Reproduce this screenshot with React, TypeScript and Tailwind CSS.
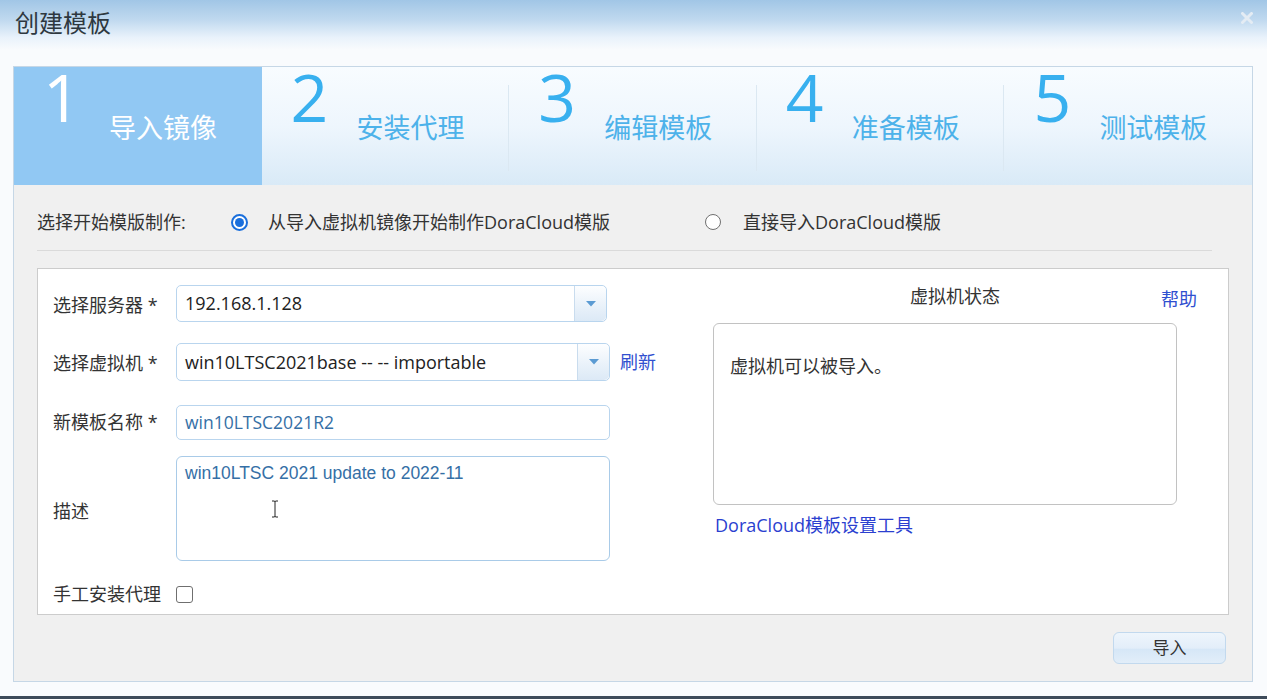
import React from "react";

const CJK = "font-['Open_Sans','Noto_Sans_CJK_SC',sans-serif]";

function Step({ n, label, active, last }: { n: string; label: string; active?: boolean; last?: boolean }) {
  return (
    <div
      className={
        "relative flex-1 flex items-start pl-[29px] " +
        (active
          ? "bg-[#91c8f3]"
          : "bg-[linear-gradient(to_bottom,#f8fcff_0%,#eef6fd_50%,#d9eaf7_100%)]")
      }
    >
      <div
        className={
          "w-[66px] h-[58px] text-[66px] leading-[58px] font-['Open_Sans',sans-serif] " +
          (active ? "text-white" : "text-[#38b0ef]")
        }
      >
        {n}
      </div>
      <div
        className={
          "mt-[43px] h-[36px] leading-[36px] text-[27px] whitespace-nowrap " +
          CJK +
          " " +
          (active ? "text-white" : "text-[#4db2ea]")
        }
      >
        {label}
      </div>
      {!active && !last && n !== "1" ? (
        <div className="absolute right-0 top-[18px] bottom-[14px] w-px bg-[#dbe8f2]" />
      ) : null}
    </div>
  );
}

function Arrow() {
  return (
    <div className="w-[32px] self-stretch flex items-center justify-center border-l border-[#c9dcee] rounded-r-[5px] bg-[linear-gradient(to_bottom,#fdfeff_0%,#eaf2fa_55%,#dce9f6_100%)]">
      <svg width="10" height="6" viewBox="0 0 10 6">
        <polygon points="0,0 10,0 5,5.5" fill="#5b9bd3" />
      </svg>
    </div>
  );
}

export default function App() {
  return (
    <div className={"w-[1267px] h-[699px] flex flex-col bg-[#f9fbfd] border-b-[3px] border-[#3d4b5a] " + CJK}>
      {/* Title bar */}
      <div className="h-[50px] shrink-0 flex items-start justify-between pl-[15px] pr-[14px] bg-[linear-gradient(to_bottom,#a1c6e6_0%,#c0d9ef_40%,#e9f2fb_75%,#f9fbfd_100%)]">
        <div className="mt-[7px] text-[24px] leading-[32px] text-[#2e3840]">创建模板</div>
        <svg className="mt-[12px]" width="12" height="12" viewBox="0 0 12 12">
          <path d="M1.5 1.5 L10.5 10.5 M10.5 1.5 L1.5 10.5" stroke="#e4ecf4" strokeWidth="3" strokeLinecap="round" />
        </svg>
      </div>

      <div className="pt-[16px] pl-[13px]">
        <div className="w-[1240px] h-[616px] border border-[#c6d7e6] bg-[#f0f0f0] flex flex-col">
          {/* Steps */}
          <div className="h-[118px] shrink-0 flex">
            <Step n="1" label="导入镜像" active />
            <Step n="2" label="安装代理" />
            <Step n="3" label="编辑模板" />
            <Step n="4" label="准备模板" />
            <Step n="5" label="测试模板" last />
          </div>

          {/* Radio row */}
          <div className="pt-[24px] pl-[23px]">
            <div className="h-[26px] flex items-center">
              <div className="text-[18px] text-[#333] w-[194px] whitespace-nowrap">选择开始模版制作:</div>
              <div className="w-[17px] h-[17px] rounded-full border-2 border-[#1a6fdc] flex items-center justify-center bg-white">
                <div className="w-[9px] h-[9px] rounded-full bg-[#1a6fdc]" />
              </div>
              <div className="ml-[20px] text-[18px] text-[#333] whitespace-nowrap">从导入虚拟机镜像开始制作DoraCloud模版</div>
              <div className="ml-[95px] w-[16px] h-[16px] rounded-full border-[1.5px] border-[#707070] bg-white" />
              <div className="ml-[22px] text-[18px] text-[#333] whitespace-nowrap">直接导入DoraCloud模版</div>
            </div>
          </div>
          <div className="mt-[15px] ml-[23px] mr-[40px] h-px bg-[#dadada]" />

          {/* Inner panel */}
          <div className="mt-[17px] mx-[23px] h-[347px] border border-[#cccccc] bg-white flex">
            {/* Left column */}
            <div className="w-[675px] pl-[15px] pt-[16px] flex flex-col text-[18px] text-[#333]">
              <div className="flex items-center">
                <div className="w-[123px] pt-[3px] whitespace-nowrap">选择服务器 *</div>
                <div className="w-[431px] h-[37px] flex items-center border border-[#b9d5ee] rounded-[5px] bg-white">
                  <div className="flex-1 pl-[8px] text-[18px] text-[#222] font-['Open_Sans',sans-serif]">192.168.1.128</div>
                  <Arrow />
                </div>
              </div>
              <div className="flex items-center mt-[21px]">
                <div className="w-[123px] pt-[3px] whitespace-nowrap">选择虚拟机 *</div>
                <div className="w-[434px] h-[38px] flex items-center border border-[#b9d5ee] rounded-[5px] bg-white">
                  <div className="flex-1 pl-[8px] text-[18px] text-[#222] font-['Open_Sans',sans-serif] whitespace-nowrap">win10LTSC2021base -- -- importable</div>
                  <Arrow />
                </div>
                <div className="ml-[10px] text-[#3050cf] whitespace-nowrap">刷新</div>
              </div>
              <div className="flex items-center mt-[24px]">
                <div className="w-[123px] whitespace-nowrap">新模板名称 *</div>
                <div className="w-[434px] h-[35px] flex items-center border border-[#b9d5ee] rounded-[5px] bg-white pl-[8px] text-[17.5px] text-[#356fa6] font-['Open_Sans',sans-serif]">
                  win10LTSC2021R2
                </div>
              </div>
              <div className="flex items-center mt-[16px]">
                <div className="w-[123px] pt-[6px] whitespace-nowrap">描述</div>
                <div className="relative w-[434px] h-[105px] border border-[#a9cbe8] rounded-[6px] bg-white pl-[8px] pt-[4px] text-[17.5px] leading-[24px] text-[#356fa6] font-['Liberation_Sans',sans-serif]">
                  win10LTSC 2021 update to 2022-11
                  <svg className="absolute left-[94px] top-[43px]" width="8" height="18" viewBox="0 0 8 18">
                    <path d="M1 1 H3 Q4 1 4 2 V16 Q4 17 3 17 H1 M7 1 H5 Q4 1 4 2 M4 16 Q4 17 5 17 H7" stroke="#222" strokeWidth="1" fill="none" />
                  </svg>
                </div>
              </div>
              <div className="flex items-center mt-[20px]">
                <div className="w-[123px] whitespace-nowrap">手工安装代理</div>
                <div className="w-[17px] h-[17px] rounded-[3px] border-[1.5px] border-[#6f6f6f] bg-white" />
              </div>
            </div>

            {/* Right column */}
            <div className="w-[484px] pt-[15px] flex flex-col text-[18px]">
              <div className="relative h-[24px] leading-[24px] text-center text-[#333]">
                虚拟机状态
                <div className="absolute right-0 top-[3px] text-[#2f4fd0]">帮助</div>
              </div>
              <div className="mt-[15px] w-[464px] h-[182px] border border-[#c2c2c2] rounded-[6px] bg-white pl-[16px] pt-[30px] leading-[24px] text-[#333]">
                虚拟机可以被导入。
              </div>
              <div className="mt-[8px] ml-[2px] leading-[24px] text-[#2b3fd0] whitespace-nowrap">DoraCloud模板设置工具</div>
            </div>
          </div>

          {/* Button */}
          <div className="mt-[17px] flex justify-end pr-[26px]">
            <div className="w-[113px] h-[32px] flex items-center justify-center rounded-[6px] border border-[#c2d9ee] bg-[linear-gradient(to_bottom,#eef5fc_0%,#e3eef9_50%,#d6e7f7_55%,#e2eef9_100%)] text-[17px] text-[#333]">
              导入
            </div>
          </div>
        </div>
      </div>
    </div>
  );
}
